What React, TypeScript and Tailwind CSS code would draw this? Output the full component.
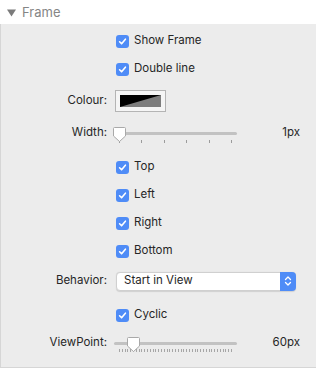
import React from "react";

const font = { fontFamily: "Inter, 'Liberation Sans', sans-serif" };

function Check() {
  return (
    <span className="flex h-[13px] w-[13px] items-center justify-center rounded-[3px] bg-[#4f8cf7]">
      <svg width="9" height="9" viewBox="0 0 9 9">
        <path d="M1.6 4.8 L3.6 6.8 L7.4 2.2" fill="none" stroke="#fff" strokeWidth="1.6" strokeLinecap="round" strokeLinejoin="round" />
      </svg>
    </span>
  );
}

function CheckRow({ label, className = "" }: { label: string; className?: string }) {
  return (
    <div className={"flex h-[28px] items-center " + className}>
      <div className="w-[106px]" />
      <div className="ml-[9px] flex items-center gap-[5px]">
        <Check />
        <span className="text-[11.5px] text-[#262626]">{label}</span>
      </div>
    </div>
  );
}

function Label({ children }: { children: React.ReactNode }) {
  return <div className="w-[106px] text-right text-[11.5px] text-[#262626]">{children}</div>;
}

function Thumb({ x }: { x: number }) {
  return (
    <path
      d={`M${x + 1.5} 4.5 h10 a1 1 0 0 1 1 1 v7.5 l-6 5.5 l-6 -5.5 v-7.5 a1 1 0 0 1 1 -1 z`}
      fill="#fff"
      stroke="#a9a9a9"
      strokeWidth="1"
    />
  );
}

function WidthSlider() {
  const ticks = [6, 28, 51, 73, 96, 118];
  return (
    <svg width="130" height="20" viewBox="0 0 130 20" className="block">
      <rect x="2" y="9" width="122" height="3" rx="1.5" fill="#c2c2c2" />
      {ticks.map((t) => (
        <rect key={t} x={t} y="17" width="1" height="3" fill="#9c9c9c" />
      ))}
      <Thumb x={0} />
    </svg>
  );
}

function ViewSlider() {
  const ticks: number[] = [];
  for (let i = 0; i <= 40; i++) ticks.push(6 + i * 2.8);
  return (
    <svg width="130" height="20" viewBox="0 0 130 20" className="block">
      <rect x="1" y="9" width="123" height="3" rx="1.5" fill="#c2c2c2" />
      {ticks.map((t, i) => (
        <rect key={i} x={Math.round(t)} y="16" width="1" height="3" fill="#a6a6a6" />
      ))}
      <Thumb x={14} />
    </svg>
  );
}

export default function App() {
  return (
    <div className="w-[316px] h-[370px] bg-white" style={font}>
      <div className="flex h-[24px] items-center bg-white pl-[7px] pt-[1px]">
        <svg width="9" height="8" viewBox="0 0 9 8" className="mt-[1px]">
          <path d="M0 0.5 H9 L4.5 7.5 Z" fill="#7b7b7b" />
        </svg>
        <span className="ml-[6px] text-[13px] text-[#858585]">Frame</span>
      </div>
      <div className="h-[344px] border-l border-b border-[#d6d6d6] bg-[#ececec] pt-[3px]">
        <CheckRow label="Show Frame" />
        <CheckRow label="Double line" />
        <div className="flex h-[36px] items-center">
          <Label>Colour:</Label>
          <div className="ml-[8px] flex h-[22px] w-[51px] items-center justify-center border border-[#b4b4b4] bg-[#f5f5f5]">
            <svg width="41" height="12" viewBox="0 0 41 12" className="block">
              <rect x="0" y="0" width="41" height="12" fill="#7d7d7d" />
              <path d="M0 0 H41 L0 12 Z" fill="#000" />
            </svg>
          </div>
        </div>
        <div className="flex h-[28px] items-center">
          <Label>Width:</Label>
          <div className="ml-[6px]">
            <WidthSlider />
          </div>
          <div className="flex-1 pr-[16px] text-right text-[11.5px] text-[#262626]">1px</div>
        </div>
        <CheckRow label="Top" className="mt-[6px]" />
        <CheckRow label="Left" />
        <CheckRow label="Right" />
        <CheckRow label="Bottom" />
        <div className="flex h-[32px] items-center">
          <Label>Behavior:</Label>
          <div className="ml-[9px] flex h-[19px] w-[180px] items-center rounded-[4px] border border-[#d0d0d0] bg-white shadow-[0_0.5px_1px_rgba(0,0,0,0.12)]">
            <span className="flex-1 pl-[7px] text-[11.5px] text-[#262626]">Start in View</span>
            <span className="flex h-[19px] w-[16px] -mr-[1px] items-center justify-center rounded-r-[4px] bg-[#4f8cf7]">
              <svg width="8" height="12" viewBox="0 0 8 12">
                <path d="M1.5 4.5 L4 2 L6.5 4.5 M1.5 7.5 L4 10 L6.5 7.5" fill="none" stroke="#fff" strokeWidth="1.3" strokeLinecap="round" strokeLinejoin="round" />
              </svg>
            </span>
          </div>
        </div>
        <CheckRow label="Cyclic" className="mt-[4px]" />
        <div className="flex h-[28px] items-center">
          <Label>ViewPoint:</Label>
          <div className="ml-[6px]">
            <ViewSlider />
          </div>
          <div className="flex-1 pr-[16px] text-right text-[11.5px] text-[#262626]">60px</div>
        </div>
      </div>
    </div>
  );
}
